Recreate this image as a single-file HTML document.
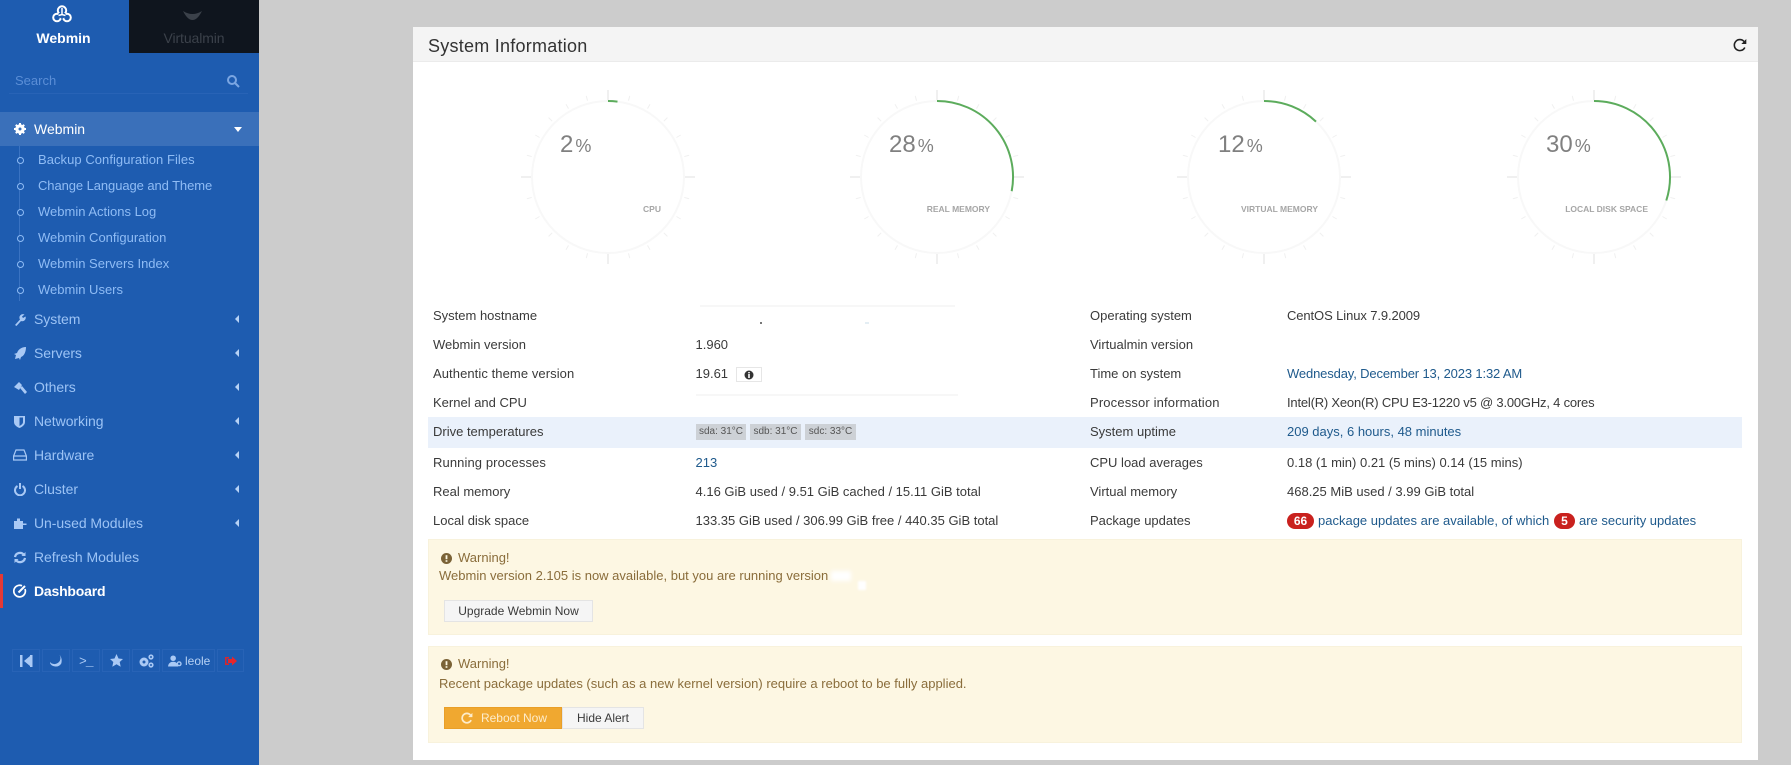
<!DOCTYPE html>
<html><head><meta charset="utf-8"><title>Webmin Dashboard</title>
<style>
html,body{margin:0;padding:0}
body{width:1791px;height:765px;overflow:hidden;background:#ccc;position:relative;font-family:"Liberation Sans",sans-serif;font-size:13px;color:#3a3a3a}
.a{position:absolute;white-space:nowrap;line-height:18px}
#side{position:absolute;left:0;top:0;width:259px;height:765px;background:#1e5cb0}
.b{position:absolute;box-sizing:border-box}
.sub{left:38px;color:#8fbcf5;font-size:13px}
.m{left:34px;color:#9cc3f5;font-size:14px;letter-spacing:-.05px}
.ic{position:absolute;left:12px}
.car{position:absolute;left:235px;width:0;height:0;border-top:4px solid transparent;border-bottom:4px solid transparent;border-right:4px solid #b7d2f5}
.dot{position:absolute;left:17px;width:5px;height:5px;border:1px solid #8fbcf5;border-radius:50%;background:#1e5cb0}
.tb{position:absolute;top:649px;height:23px;border:1px solid #2863b6;box-sizing:border-box}
.l{color:#3a3a3a;left:433px}.v{color:#3a3a3a;left:695.5px}
.l2{color:#3a3a3a;left:1090px}.v2{color:#3a3a3a;left:1287px}
.lnk{color:#1f5a8c}
.tmp{position:absolute;top:424px;height:16px;background:#cdd1d6;color:#555;font-size:10px;line-height:16px;text-align:center}
.num{font-size:24px;color:#808080;line-height:28px}
.pct{font-size:18px;color:#808080;margin-left:2px}
.lab{font-size:8.5px;font-weight:bold;color:#a6a6a6;text-align:right}
.alert{position:absolute;left:428px;width:1314px;background:#fdf7e3;border:1px solid #f8f2dc;box-sizing:border-box}
.y{color:#8a6d3b}
.btn{position:absolute;box-sizing:border-box;background:#f5f5f5;border:1px solid #e4e4e4;color:#3a3a3a;font-size:12px;text-align:center;line-height:20px}
</style></head><body>
<svg width="0" height="0" style="position:absolute"><defs>
<g id="g">
<circle r="76" fill="none" stroke="#f8f8f8" stroke-width="2"/>
<g stroke="#e2e2e2" stroke-width="1">
<line x1="0" y1="-77" x2="0" y2="-87"/><line x1="77" y1="0" x2="87" y2="0"/><line x1="0" y1="77" x2="0" y2="87"/><line x1="-77" y1="0" x2="-87" y2="0"/>
</g>
<g stroke="#f0f0f0" stroke-width="1">
<line x1="0" y1="-79" x2="0" y2="-84" transform="rotate(15)"/><line x1="0" y1="-79" x2="0" y2="-84" transform="rotate(30)"/><line x1="0" y1="-79" x2="0" y2="-84" transform="rotate(45)"/><line x1="0" y1="-79" x2="0" y2="-84" transform="rotate(60)"/><line x1="0" y1="-79" x2="0" y2="-84" transform="rotate(75)"/>
<line x1="0" y1="-79" x2="0" y2="-84" transform="rotate(105)"/><line x1="0" y1="-79" x2="0" y2="-84" transform="rotate(120)"/><line x1="0" y1="-79" x2="0" y2="-84" transform="rotate(135)"/><line x1="0" y1="-79" x2="0" y2="-84" transform="rotate(150)"/><line x1="0" y1="-79" x2="0" y2="-84" transform="rotate(165)"/>
<line x1="0" y1="-79" x2="0" y2="-84" transform="rotate(195)"/><line x1="0" y1="-79" x2="0" y2="-84" transform="rotate(210)"/><line x1="0" y1="-79" x2="0" y2="-84" transform="rotate(225)"/><line x1="0" y1="-79" x2="0" y2="-84" transform="rotate(240)"/><line x1="0" y1="-79" x2="0" y2="-84" transform="rotate(255)"/>
<line x1="0" y1="-79" x2="0" y2="-84" transform="rotate(285)"/><line x1="0" y1="-79" x2="0" y2="-84" transform="rotate(300)"/><line x1="0" y1="-79" x2="0" y2="-84" transform="rotate(315)"/><line x1="0" y1="-79" x2="0" y2="-84" transform="rotate(330)"/><line x1="0" y1="-79" x2="0" y2="-84" transform="rotate(345)"/>
</g></g></defs></svg>

<div id="side">
<div class="b" style="left:129px;top:0;width:130px;height:53px;background:#0f151e"></div>
<svg class="b" style="left:52px;top:5px" width="20" height="18" viewBox="0 0 20 18" fill="none" stroke="#fff" stroke-width="2"><circle cx="10" cy="5.500" r="4.200"/><circle cx="5" cy="12.500" r="3.800"/><circle cx="15" cy="12.500" r="3.800"/><path d="M7 8h6l1.500 3-4.500 3-4.500-3z" fill="#1e5cb0" stroke="none"/><path d="M10 3v6.500M6.500 10.500l3.500-1 3.500 1" stroke-width="1.500"/></svg>
<svg class="b" style="left:183px;top:10px" width="19" height="10" viewBox="0 0 19 10"><path d="M0 1Q9.500 7 19 1Q14.500 10 9.500 10Q4.500 10 0 1z" fill="#3b414a"/></svg>
<div class="a" style="left:0;top:29px;width:127px;text-align:center;color:#fff;font-weight:bold;font-size:14px">Webmin</div>
<div class="a" style="left:129px;top:29px;width:130px;text-align:center;color:#3b414a;font-size:14px;letter-spacing:-.1px">Virtualmin</div>
<div class="a" style="left:15px;top:72px;color:#5b8ed6;font-size:13px">Search</div>
<svg class="b" style="left:226px;top:74px" width="14" height="14" fill="none" stroke="#7ba6e2" stroke-width="2"><circle cx="6" cy="6" r="4"/><path d="M9 9l4 4"/></svg>
<div class="b" style="left:9px;top:93px;width:239px;height:1px;background:#2863b6"></div>

<div class="b" style="left:0;top:112px;width:259px;height:34px;background:#3a70ba"></div>
<svg class="ic" style="left:14px;top:123px" width="12" height="12" viewBox="0 0 12 12"><circle cx="6" cy="6" r="3.500" fill="none" stroke="#fff" stroke-width="2.500"/><path d="M6 0v12M0 6h12M1.800 1.800l8.400 8.400M10.200 1.800l-8.400 8.400" stroke="#fff" stroke-width="2"/><circle cx="6" cy="6" r="1.500" fill="#3a70ba"/></svg>
<div class="a" style="left:34px;top:120px;color:#fff;font-size:14px">Webmin</div>
<div class="b" style="left:234px;top:127px;width:0;height:0;border-left:4.500px solid transparent;border-right:4.500px solid transparent;border-top:5px solid #fff"></div>

<div class="b" style="left:19px;top:146px;width:1px;height:155px;background:#3a73c2"></div>
<div class="dot" style="top:157px"></div><div class="dot" style="top:183px"></div><div class="dot" style="top:209px"></div><div class="dot" style="top:235px"></div><div class="dot" style="top:261px"></div><div class="dot" style="top:287px"></div>
<div class="a sub" style="top:151px;letter-spacing:.05px">Backup Configuration Files</div>
<div class="a sub" style="top:177px;letter-spacing:-.08px">Change Language and Theme</div>
<div class="a sub" style="top:203px">Webmin Actions Log</div>
<div class="a sub" style="top:229px">Webmin Configuration</div>
<div class="a sub" style="top:255px">Webmin Servers Index</div>
<div class="a sub" style="top:281px">Webmin Users</div>

<svg class="ic" style="left:14px;top:313px" width="12" height="13" viewBox="0 0 12 13"><path d="M1 12L6 6.500a3.500 3.500 0 0 1 4.500-5L8 3.500l1 1.500 2.500-1.500A3.500 3.500 0 0 1 7 8L2.500 13z" fill="#a9c9f5"/></svg>
<div class="a m" style="top:310px">System</div><div class="car" style="top:315px"></div>
<svg class="ic" style="left:14px;top:347px" width="12" height="13" viewBox="0 0 12 13"><path d="M12 0C7 0 4 3 3 6L0 7l2 1-1 4 4-1 1 2 1-3c3-1 5-5 5-10z" fill="#a9c9f5"/></svg>
<div class="a m" style="top:344px">Servers</div><div class="car" style="top:349px"></div>
<svg class="ic" style="left:14px;top:381px" width="13" height="13" viewBox="0 0 13 13"><path d="M0 6l5-5 3 3-3 5zM6 7l2-2 5 6-2 2z" fill="#a9c9f5"/></svg>
<div class="a m" style="top:378px">Others</div><div class="car" style="top:383px"></div>
<svg class="ic" style="left:14px;top:415px" width="11" height="13" viewBox="0 0 11 13"><path d="M0 1h11v6c0 3-3 5-5.500 6C3 12 0 10 0 7z" fill="#a9c9f5"/><path d="M5.500 2.500H9V7c0 2-2 3-3.500 4z" fill="#1e5cb0"/></svg>
<div class="a m" style="top:412px">Networking</div><div class="car" style="top:417px"></div>
<svg class="ic" style="left:13px;top:449px" width="14" height="12" viewBox="0 0 14 12" fill="none" stroke="#a9c9f5" stroke-width="1.200"><path d="M3 1h8l2.400 6v4H.6V7zM.6 7h12.800"/></svg>
<div class="a m" style="top:446px">Hardware</div><div class="car" style="top:451px"></div>
<svg class="ic" style="left:14px;top:483px" width="12" height="13" viewBox="0 0 12 13" fill="none" stroke="#a9c9f5" stroke-width="2"><path d="M3.500 3a5 5 0 1 0 5 0M6 0v6"/></svg>
<div class="a m" style="top:480px">Cluster</div><div class="car" style="top:485px"></div>
<svg class="ic" style="left:14px;top:517px" width="13" height="12" viewBox="0 0 13 12"><path d="M0 4h3V1.500h3V4h3v2.500h3.500V8H9v4H0z" fill="#a9c9f5"/></svg>
<div class="a m" style="top:514px">Un-used Modules</div><div class="car" style="top:519px"></div>
<svg class="ic" style="left:14px;top:551px" width="12" height="13" viewBox="0 0 12 13" fill="none" stroke="#a9c9f5" stroke-width="2.200"><path d="M1 6a5 5 0 0 1 9-2M11 7a5 5 0 0 1-9 2"/><path d="M11.500 1v4h-4zM.5 12V8h4z" fill="#a9c9f5" stroke="none"/></svg>
<div class="a m" style="top:548px">Refresh Modules</div>
<div class="b" style="left:0;top:574px;width:3px;height:34px;background:#e53935"></div>
<svg class="ic" style="left:13px;top:584px" width="14" height="14" viewBox="0 0 14 14" fill="none" stroke="#fff" stroke-width="1.700"><path d="M12 5a5.800 5.800 0 1 1-3-3.200"/><path d="M5.500 8.500L12 2" stroke-width="2"/></svg>
<div class="a" style="left:34px;top:582px;color:#fff;font-weight:bold;font-size:14px;letter-spacing:-.2px">Dashboard</div>

<div class="tb" style="left:12px;width:28px"></div><div class="tb" style="left:42px;width:28px"></div><div class="tb" style="left:72px;width:28px"></div><div class="tb" style="left:102px;width:28px"></div><div class="tb" style="left:132px;width:28px"></div><div class="tb" style="left:162px;width:53px"></div><div class="tb" style="left:217px;width:27px"></div>
<svg class="b" style="left:20px;top:655px" width="13" height="12" viewBox="0 0 13 12" fill="#a9c9f5"><rect x="0" y="0" width="2.500" height="12"/><rect x="10" y="0" width="2.500" height="12"/><path d="M10 1v10L4 6z"/></svg>
<svg class="b" style="left:50px;top:654px" width="13" height="13" viewBox="0 0 13 13"><path d="M8 0a6 6 0 0 1-8 9 6.500 6.500 0 0 0 12-1C12 5 11 2 8 0z" fill="#a9c9f5" transform="rotate(15 6 6)"/></svg>
<div class="a" style="left:79px;top:653px;color:#a9c9f5;font-size:13px;font-family:'Liberation Mono',monospace;letter-spacing:-1px">&gt;_</div>
<svg class="b" style="left:110px;top:654px" width="13" height="13" viewBox="0 0 13 13"><path d="M6.500 0l2 4.500 4.500.5-3.300 3 1 4.700-4.200-2.500-4.200 2.500 1-4.700L0 5l4.500-.5z" fill="#a9c9f5"/></svg>
<svg class="b" style="left:139px;top:654px" width="15" height="14" viewBox="0 0 15 14" fill="none" stroke="#a9c9f5"><circle cx="5" cy="8" r="3" stroke-width="3"/><circle cx="12" cy="3" r="1.800" stroke-width="1.600"/><circle cx="12" cy="11" r="1.800" stroke-width="1.600"/></svg>
<svg class="b" style="left:168px;top:655px" width="14" height="12" viewBox="0 0 15 13" fill="#a9c9f5"><circle cx="5.500" cy="3.500" r="3"/><path d="M0 12.500c0-7 11-7 11 0z"/><circle cx="12" cy="9.500" r="2" fill="none" stroke="#a9c9f5" stroke-width="1.500"/></svg>
<div class="a" style="left:185px;top:652px;color:#b7d2f5;font-size:12px">leole</div>
<svg class="b" style="left:225px;top:656px" width="12" height="10" viewBox="0 0 12 10"><path d="M0 1h4v1.500H1.500v5H4V9H0z" fill="#d8262c"/><path d="M3 3h4V.5L12 5 7 9.500V7H3z" fill="#e5262c"/></svg>
</div>

<div class="b" style="left:413px;top:27px;width:1345px;height:733px;background:#fff"></div>
<div class="b" style="left:413px;top:27px;width:1345px;height:35px;background:#f4f4f4;border-bottom:1px solid #ebebeb"></div>
<div class="a" style="left:428px;top:35px;font-size:18px;line-height:22px;color:#333;letter-spacing:.25px">System Information</div>
<svg class="b" style="left:1733px;top:38px" width="14" height="14" viewBox="0 0 14 14" fill="none" stroke="#222" stroke-width="1.600"><path d="M11.800 9.500a5.500 5.500 0 1 1-.8-6"/><path d="M13.300 1v5h-5z" fill="#222" stroke="none"/></svg>

<svg class="b" style="left:0;top:0" width="1791" height="290" fill="none">
<g transform="translate(608 177)"><use href="#g"/><path d="M0-76A76 76 0 0 1 9.500-75.400" stroke="#5cac5c" stroke-width="2"/></g>
<g transform="translate(937 177)"><use href="#g"/><path d="M0-76A76 76 0 0 1 74.700 14.200" stroke="#5cac5c" stroke-width="2"/></g>
<g transform="translate(1264 177)"><use href="#g"/><path d="M0-76A76 76 0 0 1 52-55.400" stroke="#5cac5c" stroke-width="2"/></g>
<g transform="translate(1594 177)"><use href="#g"/><path d="M0-76A76 76 0 0 1 72.300 23.500" stroke="#5cac5c" stroke-width="2"/></g>
</svg>
<div class="a num" style="left:560px;top:131px">2<span class="pct">%</span></div>
<div class="a num" style="left:889px;top:131px">28<span class="pct">%</span></div>
<div class="a num" style="left:1218px;top:131px">12<span class="pct">%</span></div>
<div class="a num" style="left:1546px;top:131px">30<span class="pct">%</span></div>
<div class="a lab" style="left:561px;width:100px;top:200px">CPU</div>
<div class="a lab" style="left:890px;width:100px;top:200px">REAL MEMORY</div>
<div class="a lab" style="left:1218px;width:100px;top:200px">VIRTUAL MEMORY</div>
<div class="a lab" style="left:1548px;width:100px;top:200px">LOCAL DISK SPACE</div>

<div class="b" style="left:428px;top:417px;width:1314px;height:31px;background:#eaf1fb"></div>

<div class="b" style="left:700px;top:305px;width:255px;height:2px;background:#f7f7f7"></div>
<div class="b" style="left:760px;top:322px;width:2px;height:2px;background:#777"></div>
<div class="b" style="left:865px;top:322px;width:4px;height:2px;background:#e4eef4"></div>
<div class="b" style="left:696px;top:394px;width:262px;height:2px;background:#f7f7f7"></div>

<div class="a l" style="top:307px">System hostname</div>
<div class="a l" style="top:336px">Webmin version</div><div class="a v" style="top:336px">1.960</div>
<div class="a l" style="top:365px;letter-spacing:.08px">Authentic theme version</div><div class="a v" style="top:365px">19.61</div>
<div class="b" style="left:736px;top:367px;width:26px;height:15px;border:1px solid #e6e6e6;background:#fff"></div>
<svg class="b" style="left:744px;top:370px" width="10" height="10"><circle cx="5" cy="5" r="4.500" fill="#333"/><rect x="4.200" y="4" width="1.600" height="4" fill="#fff"/><rect x="4.200" y="2" width="1.600" height="1.300" fill="#fff"/></svg>
<div class="a l" style="top:394px">Kernel and CPU</div>
<div class="a l" style="top:423px">Drive temperatures</div>
<div class="tmp" style="left:696px;width:50px">sda: 31°C</div><div class="tmp" style="left:750px;width:51px">sdb: 31°C</div><div class="tmp" style="left:805px;width:51px">sdc: 33°C</div>
<div class="a l" style="top:454px;letter-spacing:.1px">Running processes</div><div class="a v lnk" style="top:454px">213</div>
<div class="a l" style="top:483px">Real memory</div><div class="a v" style="top:483px">4.16 GiB used / 9.51 GiB cached / 15.11 GiB total</div>
<div class="a l" style="top:512px">Local disk space</div><div class="a v" style="top:512px">133.35 GiB used / 306.99 GiB free / 440.35 GiB total</div>

<div class="a l2" style="top:307px">Operating system</div><div class="a v2" style="top:307px;letter-spacing:-.1px">CentOS Linux 7.9.2009</div>
<div class="a l2" style="top:336px">Virtualmin version</div>
<div class="a l2" style="top:365px">Time on system</div><div class="a v2 lnk" style="top:365px;letter-spacing:-.14px">Wednesday, December 13, 2023 1:32 AM</div>
<div class="a l2" style="top:394px;letter-spacing:.15px">Processor information</div><div class="a v2" style="top:394px;letter-spacing:-.2px">Intel(R) Xeon(R) CPU E3-1220 v5 @ 3.00GHz, 4 cores</div>
<div class="a l2" style="top:423px">System uptime</div><div class="a v2 lnk" style="top:423px">209 days, 6 hours, 48 minutes</div>
<div class="a l2" style="top:454px">CPU load averages</div><div class="a v2" style="top:454px">0.18 (1 min) 0.21 (5 mins) 0.14 (15 mins)</div>
<div class="a l2" style="top:483px">Virtual memory</div><div class="a v2" style="top:483px">468.25 MiB used / 3.99 GiB total</div>
<div class="a l2" style="top:512px">Package updates</div>
<div class="b" style="left:1287px;top:513px;width:27px;height:16px;border-radius:8px;background:#c9211e;color:#fff;font-weight:bold;font-size:12px;line-height:16px;text-align:center">66</div>
<div class="a lnk" style="left:1318px;top:512px">package updates are available, of which</div>
<div class="b" style="left:1554px;top:513px;width:21px;height:16px;border-radius:8px;background:#c9211e;color:#fff;font-weight:bold;font-size:12px;line-height:16px;text-align:center">5</div>
<div class="a lnk" style="left:1579px;top:512px">are security updates</div>

<div class="alert" style="top:539px;height:96px"></div>
<div class="alert" style="top:646px;height:97px"></div>
<svg class="b" style="left:441px;top:553px" width="11" height="11"><circle cx="5.500" cy="5.500" r="5.500" fill="#7a6236"/><rect x="4.600" y="2.200" width="1.800" height="4" fill="#fdf7e3"/><rect x="4.600" y="7.200" width="1.800" height="1.600" fill="#fdf7e3"/></svg>
<div class="a y" style="left:458px;top:549px">Warning!</div>
<div class="a y" style="left:439px;top:567px">Webmin version 2.105 is now available, but you are running version</div>
<div class="b" style="left:831px;top:571px;width:20px;height:10px;background:#fff;filter:blur(2px)"></div>
<div class="b" style="left:858px;top:581px;width:8px;height:9px;background:#fff;filter:blur(1px)"></div>
<div class="btn" style="left:444px;top:600px;width:149px;height:22px">Upgrade Webmin Now</div>
<svg class="b" style="left:441px;top:659px" width="11" height="11"><circle cx="5.500" cy="5.500" r="5.500" fill="#7a6236"/><rect x="4.600" y="2.200" width="1.800" height="4" fill="#fdf7e3"/><rect x="4.600" y="7.200" width="1.800" height="1.600" fill="#fdf7e3"/></svg>
<div class="a y" style="left:458px;top:655px">Warning!</div>
<div class="a y" style="left:439px;top:675px">Recent package updates (such as a new kernel version) require a reboot to be fully applied.</div>
<div class="btn" style="left:444px;top:707px;width:118px;height:22px;background:#f0a830;border-color:#e99f28;color:#fdeccb;padding-left:22px">Reboot Now</div>
<svg class="b" style="left:461px;top:712px" width="12" height="12" viewBox="0 0 14 14" fill="none" stroke="#fdeccb" stroke-width="2"><path d="M11.800 9.500a5.500 5.500 0 1 1-.8-6"/><path d="M13.300 1v5h-5z" fill="#fdeccb" stroke="none"/></svg>
<div class="btn" style="left:562px;top:707px;width:82px;height:22px">Hide Alert</div>
</body></html>
